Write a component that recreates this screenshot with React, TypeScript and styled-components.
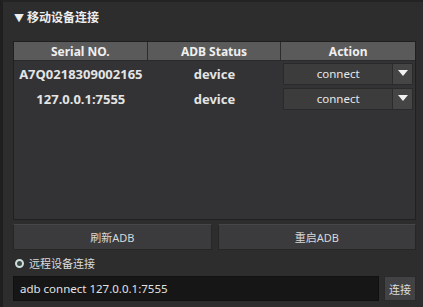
import React from "react";
import styled, { createGlobalStyle } from "styled-components";

const Global = createGlobalStyle`
  html, body { margin: 0; padding: 0; background: #2c2c2c; }
  * { box-sizing: border-box; }
`;

const Frame = styled.div`
  width: 423px;
  height: 307px;
  background: #2d2d2d;
  border-left: 3px solid #1f1f1f;
  border-top: 2px solid #232323;
  padding: 0 7px 0 10px;
  display: flex;
  flex-direction: column;
  font-family: "Noto Sans", "Noto Sans CJK SC", sans-serif;
  color: #e6e6e6;
  overflow: hidden;
`;

const Title = styled.div`
  height: 28px;
  display: flex;
  align-items: center;
  gap: 3px;
  padding-left: 1px;
  padding-top: 2px;
  font-size: 12px;
  font-weight: 700;
  color: #eeeeee;
`;

const Table = styled.div`
  margin-top: 11px;
  height: 179px;
  border: 1px solid #202020;
  background: #333335;
  display: flex;
  flex-direction: column;
`;

const HeaderRow = styled.div`
  display: grid;
  grid-template-columns: 1fr 1fr 1fr;
  height: 19px;
  background: #5a5a5a;
  border-bottom: 1px solid #2a2a2a;
`;

const HeadCell = styled.div<{ $last?: boolean }>`
  display: flex;
  align-items: center;
  justify-content: center;
  font-size: 12px;
  font-weight: 700;
  color: #efefef;
  border-right: ${(p) => (p.$last ? "none" : "1px solid #2c2c2c")};
`;

const Row = styled.div`
  display: grid;
  grid-template-columns: 1fr 1fr 1fr;
  height: 25px;
  align-items: center;
`;

const Cell = styled.div`
  display: flex;
  align-items: center;
  justify-content: center;
  font-size: 13px;
  font-weight: 700;
  color: #e4e4e4;
`;

const Combo = styled.div`
  margin: 0 2px 0 2px;
  height: 22px;
  display: flex;
  background: #3c3c3c;
  border: 1px solid #2a2a2a;
`;

const ComboText = styled.div`
  flex: 1;
  display: flex;
  align-items: center;
  justify-content: center;
  font-size: 11.5px;
  color: #e8e8e8;
  border-right: 1px solid #2c2c2c;
`;

const ComboArrow = styled.div`
  width: 19px;
  display: flex;
  align-items: center;
  justify-content: center;
  background: #454545;
`;

const ButtonRow = styled.div`
  margin-top: 4px;
  display: grid;
  grid-template-columns: 1fr 1fr;
  gap: 6px;
`;

const Button = styled.div`
  height: 26px;
  display: flex;
  align-items: center;
  justify-content: center;
  background: #3b3b3d;
  border: 1px solid #262626;
  border-top-color: #464646;
  font-size: 11px;
  color: #d8d8d8;
`;

const RadioRow = styled.div`
  height: 26px;
  display: flex;
  align-items: center;
  gap: 5px;
  padding-left: 2px;
  font-size: 11px;
  color: #dcdcdc;
`;

const Radio = styled.div`
  width: 9px;
  height: 9px;
  border-radius: 50%;
  border: 2px solid #cfe0dc;
  background: #3f4a48;
`;

const InputRow = styled.div`
  display: flex;
  gap: 5px;
  height: 25px;
`;

const Input = styled.div`
  flex: 1;
  background: #161616;
  border: 1px solid #111;
  display: flex;
  align-items: center;
  padding-left: 6px;
  font-size: 11.5px;
  color: #e2e2e2;
`;

const SmallButton = styled.div`
  width: 32px;
  display: flex;
  align-items: center;
  justify-content: center;
  background: #424244;
  border: 1px solid #2a2a2a;
  font-size: 11px;
  color: #dedede;
`;

const Arrow = () => (
  <svg width="10" height="7" viewBox="0 0 10 7">
    <polygon points="0,0 10,0 5,6" fill="#f2f2f2" />
  </svg>
);

const devices = [
  { serial: "A7Q0218309002165", status: "device" },
  { serial: "127.0.0.1:7555", status: "device" },
];

export default function App() {
  return (
    <>
      <Global />
      <Frame>
        <Title>
          <span style={{ fontSize: 10 }}>▼</span>
          <span>移动设备连接</span>
        </Title>
        <Table>
          <HeaderRow>
            <HeadCell>Serial NO.</HeadCell>
            <HeadCell>ADB Status</HeadCell>
            <HeadCell $last>Action</HeadCell>
          </HeaderRow>
          {devices.map((d) => (
            <Row key={d.serial}>
              <Cell>{d.serial}</Cell>
              <Cell>{d.status}</Cell>
              <Combo>
                <ComboText>connect</ComboText>
                <ComboArrow>
                  <Arrow />
                </ComboArrow>
              </Combo>
            </Row>
          ))}
        </Table>
        <ButtonRow>
          <Button>刷新ADB</Button>
          <Button>重启ADB</Button>
        </ButtonRow>
        <RadioRow>
          <Radio />
          <span>远程设备连接</span>
        </RadioRow>
        <InputRow>
          <Input>adb connect 127.0.0.1:7555</Input>
          <SmallButton>连接</SmallButton>
        </InputRow>
      </Frame>
    </>
  );
}
